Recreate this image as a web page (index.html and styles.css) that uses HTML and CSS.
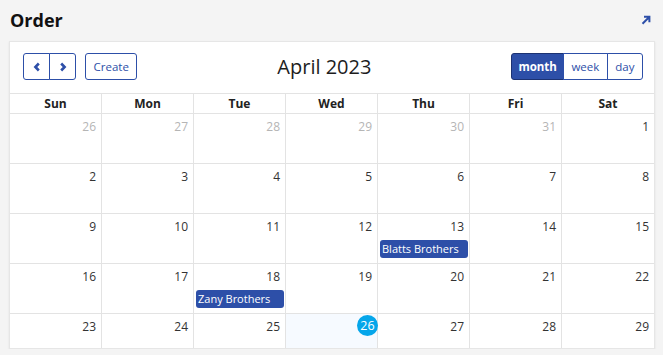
FILE: index.html
```html
<!DOCTYPE html>
<html lang="en">
<head>
    <meta charset="UTF-8">
    <title>Order</title>
    <link rel="stylesheet" href="styles.css">
</head>
<body>
    <div class="panel-head">
        <h1>Order</h1>
        <a class="expand" href="#" title="Open">
            <svg width="10" height="10" viewBox="0 0 10 10"><path d="M1.5 8.8 L8 2.3 M3 1.8 H8.4 V7.2" fill="none" stroke="#2d4fa8" stroke-width="2"/></svg>
        </a>
    </div>

    <div class="card">
        <div class="toolbar">
            <div class="chunk">
                <div class="btn-group">
                    <button class="btn nav" title="Previous">
                        <svg width="8" height="10" viewBox="0 0 8 10"><path d="M5.8 1.5 L2.4 5 L5.8 8.5" fill="none" stroke="#2d4fa8" stroke-width="2.6"/></svg>
                    </button>
                    <button class="btn nav" title="Next">
                        <svg width="8" height="10" viewBox="0 0 8 10"><path d="M2.2 1.5 L5.6 5 L2.2 8.5" fill="none" stroke="#2d4fa8" stroke-width="2.6"/></svg>
                    </button>
                </div>
                <button class="btn">Create</button>
            </div>
            <h2 class="cal-title">April 2023</h2>
            <div class="btn-group">
                <button class="btn active">month</button>
                <button class="btn">week</button>
                <button class="btn">day</button>
            </div>
        </div>

        <div class="cal">
            <div class="cal-row cal-head">
                <div class="cell">Sun</div>
                <div class="cell">Mon</div>
                <div class="cell">Tue</div>
                <div class="cell">Wed</div>
                <div class="cell">Thu</div>
                <div class="cell">Fri</div>
                <div class="cell">Sat</div>
            </div>
            <div class="cal-body">
                <div class="cal-row week">
                    <div class="cell other"><span class="num">26</span></div>
                    <div class="cell other"><span class="num">27</span></div>
                    <div class="cell other"><span class="num">28</span></div>
                    <div class="cell other"><span class="num">29</span></div>
                    <div class="cell other"><span class="num">30</span></div>
                    <div class="cell other"><span class="num">31</span></div>
                    <div class="cell"><span class="num">1</span></div>
                </div>
                <div class="cal-row week">
                    <div class="cell"><span class="num">2</span></div>
                    <div class="cell"><span class="num">3</span></div>
                    <div class="cell"><span class="num">4</span></div>
                    <div class="cell"><span class="num">5</span></div>
                    <div class="cell"><span class="num">6</span></div>
                    <div class="cell"><span class="num">7</span></div>
                    <div class="cell"><span class="num">8</span></div>
                </div>
                <div class="cal-row week">
                    <div class="cell"><span class="num">9</span></div>
                    <div class="cell"><span class="num">10</span></div>
                    <div class="cell"><span class="num">11</span></div>
                    <div class="cell"><span class="num">12</span></div>
                    <div class="cell"><span class="num">13</span><div class="event">Blatts Brothers</div></div>
                    <div class="cell"><span class="num">14</span></div>
                    <div class="cell"><span class="num">15</span></div>
                </div>
                <div class="cal-row week">
                    <div class="cell"><span class="num">16</span></div>
                    <div class="cell"><span class="num">17</span></div>
                    <div class="cell"><span class="num">18</span><div class="event">Zany Brothers</div></div>
                    <div class="cell"><span class="num">19</span></div>
                    <div class="cell"><span class="num">20</span></div>
                    <div class="cell"><span class="num">21</span></div>
                    <div class="cell"><span class="num">22</span></div>
                </div>
                <div class="cal-row week">
                    <div class="cell"><span class="num">23</span></div>
                    <div class="cell"><span class="num">24</span></div>
                    <div class="cell"><span class="num">25</span></div>
                    <div class="cell today"><span class="num">26</span></div>
                    <div class="cell"><span class="num">27</span></div>
                    <div class="cell"><span class="num">28</span></div>
                    <div class="cell"><span class="num">29</span></div>
                </div>
            </div>
        </div>
    </div>
</body>
</html>
```

FILE: styles.css
```css
body {
    margin: 0;
    padding: 0 8px 0 9px;
    background: #f4f4f4;
    font-family: "Open Sans", Arial, sans-serif;
    color: #222;
}
.panel-head {
    height: 41px;
    display: flex;
    align-items: center;
    justify-content: space-between;
    padding: 0 4px 0 1px;
}
.panel-head h1 {
    margin: 0 0 2px;
    font-size: 18px;
    font-weight: 700;
    color: #111;
}
.expand {
    display: flex;
    margin-bottom: 2px;
}
.card {
    height: 306px;
    background: #fff;
    border: 1px solid #e6e6e6;
    box-shadow: 0 1px 2px rgba(0, 0, 0, 0.08);
    overflow: hidden;
}
.toolbar {
    display: flex;
    align-items: center;
    justify-content: space-between;
    padding: 11px 11px 13px 13px;
}
.chunk {
    display: flex;
    gap: 9px;
}
.cal-title {
    margin: 0;
    font-size: 20px;
    font-weight: 500;
    color: #1d1d1d;
}
.btn-group {
    display: flex;
}
.btn {
    height: 27px;
    padding: 0 7.5px;
    background: #fff;
    border: 1px solid #2d4fa8;
    border-radius: 3px;
    color: #2d4fa8;
    font-family: inherit;
    font-size: 11.5px;
    cursor: pointer;
}
.btn-group .btn {
    border-radius: 0;
}
.btn-group .btn + .btn {
    margin-left: -1px;
}
.btn-group .btn:first-child {
    border-radius: 3px 0 0 3px;
}
.btn-group .btn:last-child {
    border-radius: 0 3px 3px 0;
}
.btn.nav {
    width: 27px;
    padding: 0;
    display: flex;
    align-items: center;
    justify-content: center;
}
.btn.active {
    background: #2d4fa8;
    border-color: #1c3272;
    color: #fff;
    font-weight: 700;
    padding: 0 6px;
}
.cal-row {
    display: grid;
    grid-template-columns: repeat(7, 1fr);
}
.cal-head {
    border-top: 1px solid #e3e3e3;
}
.cell {
    border-right: 1px solid #e3e3e3;
    border-bottom: 1px solid #e3e3e3;
    font-size: 12px;
    color: #333;
}
.cell:last-child {
    border-right: none;
}
.cal-head .cell {
    text-align: center;
    font-weight: 700;
    color: #222;
    line-height: 19px;
}
.week .cell {
    height: 49px;
    display: flex;
    flex-direction: column;
    align-items: flex-end;
}
.num {
    padding: 4px 5px 0 0;
    line-height: 18px;
}
.other .num {
    color: #b5b5b5;
}
.today {
    background: #f6faff;
}
.today .num {
    width: 21px;
    height: 21px;
    margin: 1px -1px 0 0;
    padding: 0;
    border-radius: 50%;
    background: #05a6ea;
    color: #fff;
    font-size: 12.5px;
    line-height: 21px;
    text-align: center;
}
.event {
    align-self: stretch;
    margin: 4px 1px 0 2px;
    height: 18px;
    padding-left: 2px;
    background: #2d4fa8;
    border-radius: 3px;
    color: #fff;
    font-size: 11px;
    line-height: 18px;
    white-space: nowrap;
    overflow: hidden;
}
```
